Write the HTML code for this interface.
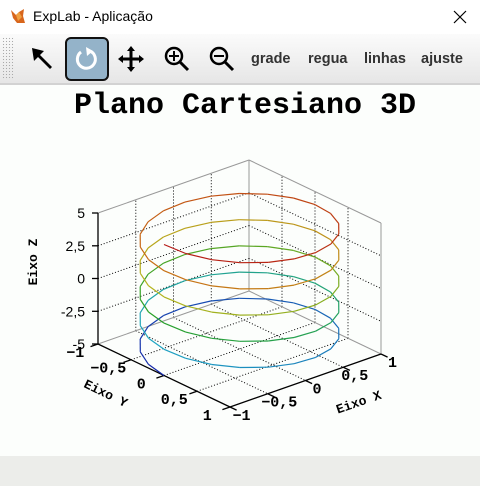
<!DOCTYPE html>
<html><head><meta charset="utf-8"><style>
body{margin:0;width:480px;height:486px;overflow:hidden;background:#fcfefc;font-family:"Liberation Sans",sans-serif;position:relative}
#tb{position:absolute;left:0;top:0;width:480px;height:34px;background:#fff}
#tt{position:absolute;left:33px;top:8px;font-size:14px;color:#000}
#tool{position:absolute;left:0;top:34px;width:480px;height:49px;background:linear-gradient(#fbfbfb,#e6e6e6);border-bottom:2px solid #d2d2d2}
.tx{position:absolute;top:17px;font-weight:bold;font-size:14.5px;color:#333}
#bot{position:absolute;left:0;top:456px;width:480px;height:30px;background:#ecedea}
</style></head><body>
<div id="tb">
<svg style="position:absolute;left:10px;top:8px" width="17" height="17" viewBox="0 0 17 17"><path d="M1 2 L6 7 L9 4 L14 1 L13 8 L15 15 L7 15 L3 10 Z" fill="#d8661c"/><path d="M6 7 L9 4 L12 9 L8 13Z" fill="#f0a040"/></svg>
<div id="tt">ExpLab - Aplicação</div>
<svg style="position:absolute;left:453px;top:10px" width="14" height="14"><path d="M1 1L13 13M13 1L1 13" stroke="#000" stroke-width="1.2"/></svg>
</div>
<div id="tool">
<div style="position:absolute;left:2px;top:3px;width:12px;height:43px;background-image:radial-gradient(#aaa 0.6px,transparent 0.8px);background-size:3px 3px"></div>
<svg style="position:absolute;left:30px;top:12px" width="26" height="26" viewBox="0 0 26 26"><path d="M2 2 L14 5 L10 9 L22 21 L20 23 L8 11 L4 15Z" fill="#000"/></svg>
<div style="position:absolute;left:65px;top:3px;width:40px;height:40px;border:2px solid #111;border-radius:6px;background:#94b3c9"></div>
<svg style="position:absolute;left:73px;top:12px" width="26" height="26" viewBox="0 0 26 26"><path d="M8 6 A9 9 0 1 0 17 5" fill="none" stroke="#fff" stroke-width="3"/><path d="M13 1 L20 5 L14 10Z" fill="#fff"/></svg>
<svg style="position:absolute;left:118px;top:12px" width="26" height="26" viewBox="0 0 26 26"><path d="M13 3V23M3 13H23" stroke="#000" stroke-width="3"/><path d="M13 0L9 5H17ZM13 26L9 21H17ZM0 13L5 9V17ZM26 13L21 9V17Z" fill="#000"/></svg>
<svg style="position:absolute;left:163px;top:11px" width="28" height="28" viewBox="0 0 28 28"><circle cx="11" cy="11" r="8" fill="none" stroke="#000" stroke-width="2.5"/><path d="M17 17L25 25" stroke="#000" stroke-width="3"/><path d="M11 6V16M6 11H16" stroke="#000" stroke-width="2"/></svg>
<svg style="position:absolute;left:208px;top:11px" width="28" height="28" viewBox="0 0 28 28"><circle cx="11" cy="11" r="8" fill="none" stroke="#000" stroke-width="2.5"/><path d="M17 17L25 25" stroke="#000" stroke-width="3"/><path d="M6 11H16" stroke="#000" stroke-width="2"/></svg>
<div class="tx" style="left:251px">grade</div>
<div class="tx" style="left:308px">regua</div>
<div class="tx" style="left:364px">linhas</div>
<div class="tx" style="left:421px">ajuste</div>
</div>
<svg id="plot" style="position:absolute;left:0;top:0" width="480" height="456"></svg>
<div id="bot"></div>
<script>
var s=document.getElementById('plot'),h='';
var C=[239.5,349],ex=[75.5,-26.5],ey=[66,31.5],ez=13.1;
function P(x,y,z){return [C[0]+x*ex[0]+y*ey[0],C[1]+x*ex[1]+y*ey[1]-(z+5)*ez];}
function L(a,b,st,w,d){h+='<line x1="'+a[0].toFixed(1)+'" y1="'+a[1].toFixed(1)+'" x2="'+b[0].toFixed(1)+'" y2="'+b[1].toFixed(1)+'" stroke="'+st+'" stroke-width="'+(w||1)+'"'+(d?' stroke-dasharray="1,2"':'')+'/>';}
function T(x,y,t,st){h+='<text x="'+x.toFixed(1)+'" y="'+y.toFixed(1)+'" '+st+'>'+t+'</text>';}
var g=[-0.5,0,0.5],zs=[-2.5,0,2.5];
g.forEach(function(v){L(P(v,-1,-5),P(v,-1,5),'#000',1,1);L(P(1,v,-5),P(1,v,5),'#000',1,1);L(P(v,-1,-5),P(v,1,-5),'#000',1,1);L(P(-1,v,-5),P(1,v,-5),'#000',1,1);});
zs.forEach(function(z){L(P(-1,-1,z),P(1,-1,z),'#000',1,1);L(P(1,-1,z),P(1,1,z),'#000',1,1);});
var gr='#999';
L(P(1,-1,-5),P(1,-1,5),gr);L(P(1,1,-5),P(1,1,5),gr);L(P(-1,-1,5),P(1,-1,5),gr);L(P(1,-1,5),P(1,1,5),gr);L(P(-1,-1,-5),P(1,-1,-5),gr);L(P(1,-1,-5),P(1,1,-5),gr);
L(P(-1,-1,-5),P(-1,-1,5),'#000',1.3);L(P(-1,-1,-5),P(-1,1,-5),'#000',1.3);L(P(-1,1,-5),P(1,1,-5),'#000',1.3);
[-5,-2.5,0,2.5,5].forEach(function(z){var p=P(-1,-1,z);L(p,[p[0]-6,p[1]],'#000',1.3);T(p[0]-13,p[1]+5,(z+'').replace('.',','),'font-size="14" text-anchor="end" fill="#000"');});
var lab=['−1','−0,5','0','0,5','1'];
var mf='font-family="Liberation Mono,monospace" font-weight="bold" font-size="15" text-anchor="middle"';
[-1,-0.5,0,0.5,1].forEach(function(v,i){var p=P(-1,v,-5);L(p,[p[0]-ex[0]*0.1,p[1]-ex[1]*0.1],'#000',1.3);
var q=P(-1.3,v,-5);T(q[0],q[1]+5,lab[i],mf);
p=P(v,1,-5);L(p,[p[0]+ey[0]*0.1,p[1]+ey[1]*0.1],'#000',1.3);q=P(v,1.25,-5);T(q[0]-5,q[1]+5,lab[i],mf);});
var st=[[20,40,170],[30,165,195],[40,160,40],[180,180,30],[200,110,20],[180,20,20]];
function col(t){t=Math.max(0,Math.min(1,t))*5;var i=Math.min(4,Math.floor(t)),f=t-i,a=st[i],b=st[i+1];return 'rgb('+[0,1,2].map(function(k){return Math.round(a[k]+(b[k]-a[k])*f)}).join(',')+')';}
var N=5*22;for(var i=0;i<N;i++){var f=function(k){var t=k/N*10*Math.PI;return P(-Math.cos(t),-Math.sin(t),-5+10*k/N);};L(f(i),f(i+1),col(i/N),1.2);}
T(245,113,'Plano Cartesiano 3D','font-family="Liberation Mono,monospace" font-weight="bold" font-size="30" text-anchor="middle"');
var lf='font-family="Liberation Mono,monospace" font-weight="bold" font-size="13" text-anchor="middle"';
h+='<text transform="translate(37,262) rotate(-90)" '+lf+'>Eixo Z</text>';
h+='<text transform="translate(104,397) rotate(26)" '+lf+'>Eixo Y</text>';
h+='<text transform="translate(360,406) rotate(-19)" '+lf+'>Eixo X</text>';
s.innerHTML=h;
</script>
</body></html>
